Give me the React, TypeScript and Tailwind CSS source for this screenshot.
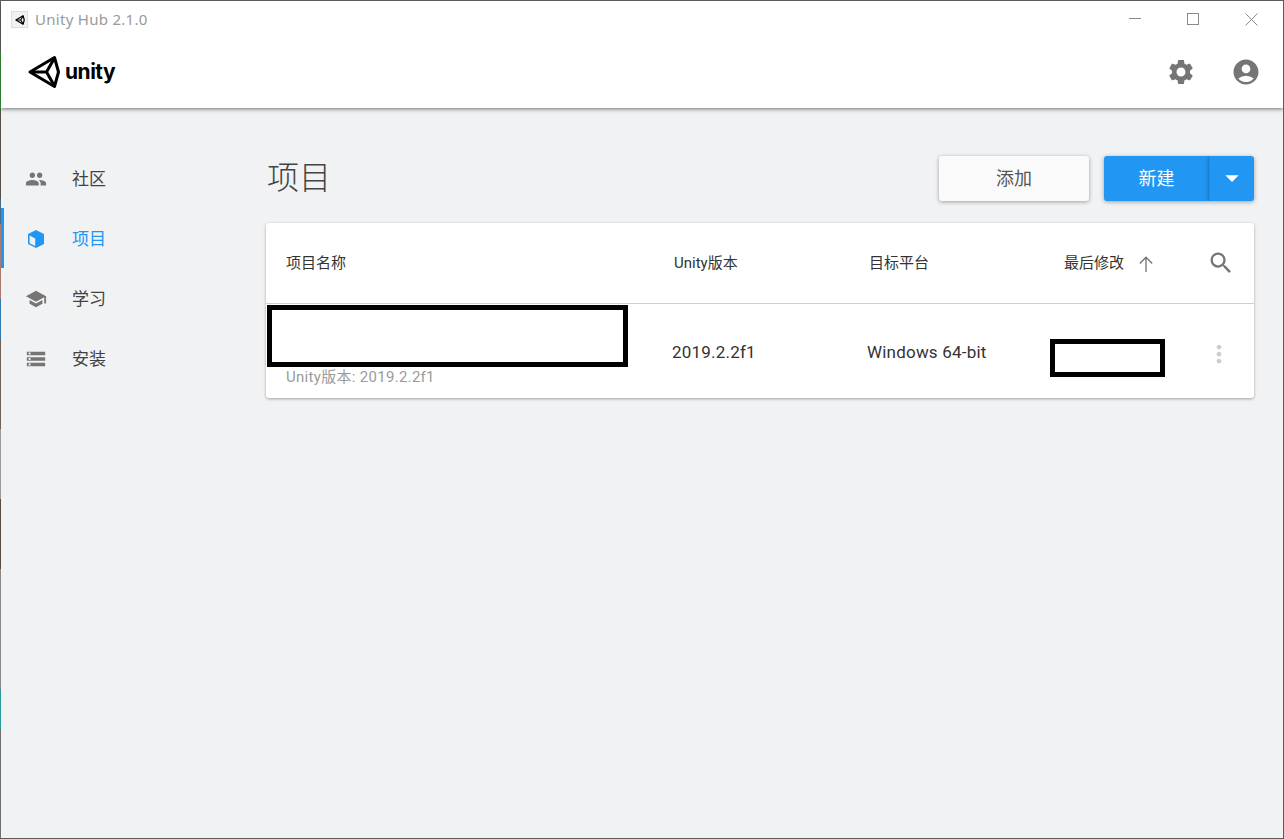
import { MdPeople, MdSchool, MdStorage, MdSettings, MdAccountCircle, MdSearch, MdMoreVert, MdArrowDropDown } from "react-icons/md";

const BODY = "font-['Roboto','Noto_Sans_CJK_SC',sans-serif]";

// Unity cube mark: three open faces meeting at a central vertex
function UnityMark({ className, weight = 3 }: { className?: string; weight?: number }) {
  return (
    <svg viewBox="0 0 32 34" className={className} fill="none" stroke="#000" strokeWidth={weight} strokeLinejoin="round">
      <path d="M2 17 L26.5 2.5 L30.5 17 L26.5 31.5 Z" />
      <path d="M2 17 H18.5 L26.5 3 M18.5 17 L26.5 31" />
    </svg>
  );
}

function CubeIcon({ className }: { className?: string }) {
  return (
    <svg viewBox="0 0 18 20" className={className} fill="none">
      <path d="M9 1 L17 5 V15 L9 19 L1 15 V5 Z" fill="#2196f3" />
      <path d="M2.6 6.6 L8.2 9.4 V17 L2.6 14.2 Z" fill="#f1f2f4" />
    </svg>
  );
}

const navItems = [
  { label: "社区", icon: <MdPeople className="w-[22px] h-[22px] text-[#757575]" /> },
  { label: "项目", icon: <CubeIcon className="w-[18px] h-[20px]" />, active: true },
  { label: "学习", icon: <MdSchool className="w-[22px] h-[22px] text-[#757575]" /> },
  { label: "安装", icon: <MdStorage className="w-[22px] h-[22px] text-[#757575]" /> },
];

function Sidebar() {
  return (
    <nav className="w-[265px] shrink-0 pt-[40px]">
      {navItems.map((item) => (
        <div
          key={item.label}
          className={`h-[60px] flex items-center pt-[2px] border-l-[3px] ${item.active ? "border-[#2196f3]" : "border-transparent"}`}
        >
          <span className="w-[22px] ml-[21px] flex justify-center">{item.icon}</span>
          <span className={`ml-[25px] mt-[2px] text-[17px] ${item.active ? "text-[#2196f3]" : "text-[#424242]"}`}>{item.label}</span>
        </div>
      ))}
    </nav>
  );
}

function ProjectCard() {
  return (
    <section className="mt-[22px] bg-white rounded-[3px] shadow-[0_1px_3px_rgba(0,0,0,0.35)] text-[#333]">
      <div className="h-[81px] flex items-center border-b border-[#cfcfcf] text-[15px]">
        <span className="w-[408px] pl-5">项目名称</span>
        <span className="w-[195px]">Unity版本</span>
        <span className="w-[195px]">目标平台</span>
        <span className="w-[60px]">最后修改</span>
        <svg viewBox="0 0 16 16" className="w-[18px] h-[18px] ml-[13px] mt-0.5" fill="none" stroke="#757575" strokeWidth="1.2">
          <path d="M8 15 V2 M2.5 7.5 L8 2 L13.5 7.5" />
        </svg>
        <MdSearch className="w-7 h-7 ml-[52px] text-[#757575]" />
      </div>
      <div className="relative h-[94px] flex items-center">
        <div className="w-[406px] pl-5 self-end pb-[10px] text-[15px] tracking-[0.3px] text-[#9b9b9b]">Unity版本: 2019.2.2f1</div>
        <div className="w-[195px] text-[17px] tracking-[0.2px] mt-1">2019.2.2f1</div>
        <div className="w-[183px] text-[17px] tracking-[0.2px] mt-1">Windows 64-bit</div>
        <div className="w-[116px]" />
        <MdMoreVert className="w-7 h-7 ml-[39px] mt-1.5 text-[#cccccc]" />
        {/* Redacted regions sit on top of the row */}
        <div className="absolute left-px top-px w-[361px] h-[62px] border-[5px] border-black bg-white" />
        <div className="absolute left-[784px] top-[35px] w-[115px] h-[38px] border-[5px] border-black bg-white" />
      </div>
    </section>
  );
}

// Sliver of desktop showing past the window's left edge
const desktopEdge = [
  "h-[50px] bg-[#6a6a6a]",
  "h-[58px] bg-[#3a9f3a]",
  "h-[90px] bg-[#55504a]",
  "h-[25px] bg-[#3f6d8a]",
  "h-[75px] bg-[#a9786f]",
  "h-[40px] bg-[#2f78b0]",
  "h-[90px] bg-[#6e6054]",
  "h-[70px] bg-[#9a9a9a]",
  "h-[70px] bg-[#5a4a40]",
  "h-[120px] bg-[#888888]",
  "h-[40px] bg-[#2a9a9a]",
  "flex-1 bg-[#6f6f6f]",
];

export default function App() {
  return (
    <div className={`h-screen w-full flex bg-[#f1f2f4] border-y border-r border-[#5c5c5c] overflow-hidden ${BODY}`}>
      <div className="w-px shrink-0 flex flex-col">
        {desktopEdge.map((c) => (
          <div key={c} className={c} />
        ))}
      </div>
      <div className="flex-1 min-w-0 flex flex-col">
        <header className="h-[107px] shrink-0 bg-white shadow-[0_1px_4px_rgba(0,0,0,0.55)] z-10 flex flex-col">
          <div className="h-[37px] flex items-start">
            <div className="ml-[10px] mt-[10px] w-[17px] h-[17px] bg-[#f2f2f2] border border-[#dddddd] flex items-center justify-center">
              <UnityMark className="w-[10px] h-[10px]" weight={4} />
            </div>
            <span className="ml-[7px] mt-[7px] font-['Noto_Sans',sans-serif] text-[15px] leading-[22px] text-[#9a9a9a] tracking-[0.28px]">Unity Hub 2.1.0</span>
            <div className="ml-auto flex items-start">
              <div className="w-[12px] h-px bg-[#8a8a8a] mt-[17px] mr-[46px]" />
              <div className="w-[12px] h-[12px] border border-[#8a8a8a] mt-[12px] mr-[46px]" />
              <svg viewBox="0 0 13 13" className="w-[13px] h-[13px] mt-[12px] mr-[25px]" stroke="#8a8a8a" strokeWidth="1">
                <path d="M0.5 0.5 L12.5 12.5 M12.5 0.5 L0.5 12.5" />
              </svg>
            </div>
          </div>
          <div className="flex-1 flex items-center pb-[3px]">
            <UnityMark className="ml-[27px] w-[32px] h-[34px]" />
            <span className="ml-[5px] mt-1 font-['Inter',sans-serif] text-[21px] font-bold tracking-[-0.5px] text-black leading-none pb-1">unity</span>
            <div className="ml-auto flex items-center">
              <MdSettings className="w-[30px] h-[30px] text-[#757575]" />
              <MdAccountCircle className="w-[30px] h-[30px] ml-[35px] mr-[22px] text-[#757575]" />
            </div>
          </div>
        </header>

        <div className="flex-1 flex min-h-0">
          <Sidebar />
          <main className="flex-1 mr-[29px] pt-[47px]">
            <div className="flex items-center h-[46px]">
              <h1 className="ml-px text-[32px] font-light text-[#444444]">项目</h1>
              <button className="ml-auto w-[150px] h-[45px] pt-0.5 bg-[#fafafa] rounded-[3px] text-lg text-[#555] shadow-[0_1px_4px_rgba(0,0,0,0.35)]">添加</button>
              <button className="ml-[15px] w-[105px] h-[45px] pt-0.5 bg-[#2196f3] rounded-l-[3px] text-lg text-white shadow-[0_1px_4px_rgba(0,0,0,0.35)]">新建</button>
              <button className="w-[45px] h-[45px] bg-[#2196f3] rounded-r-[3px] border-l border-[#1e8ae0] flex items-center justify-center shadow-[0_1px_4px_rgba(0,0,0,0.35)]">
                <MdArrowDropDown className="w-8 h-8 text-white" />
              </button>
            </div>
            <ProjectCard />
          </main>
        </div>
      </div>
    </div>
  );
}
